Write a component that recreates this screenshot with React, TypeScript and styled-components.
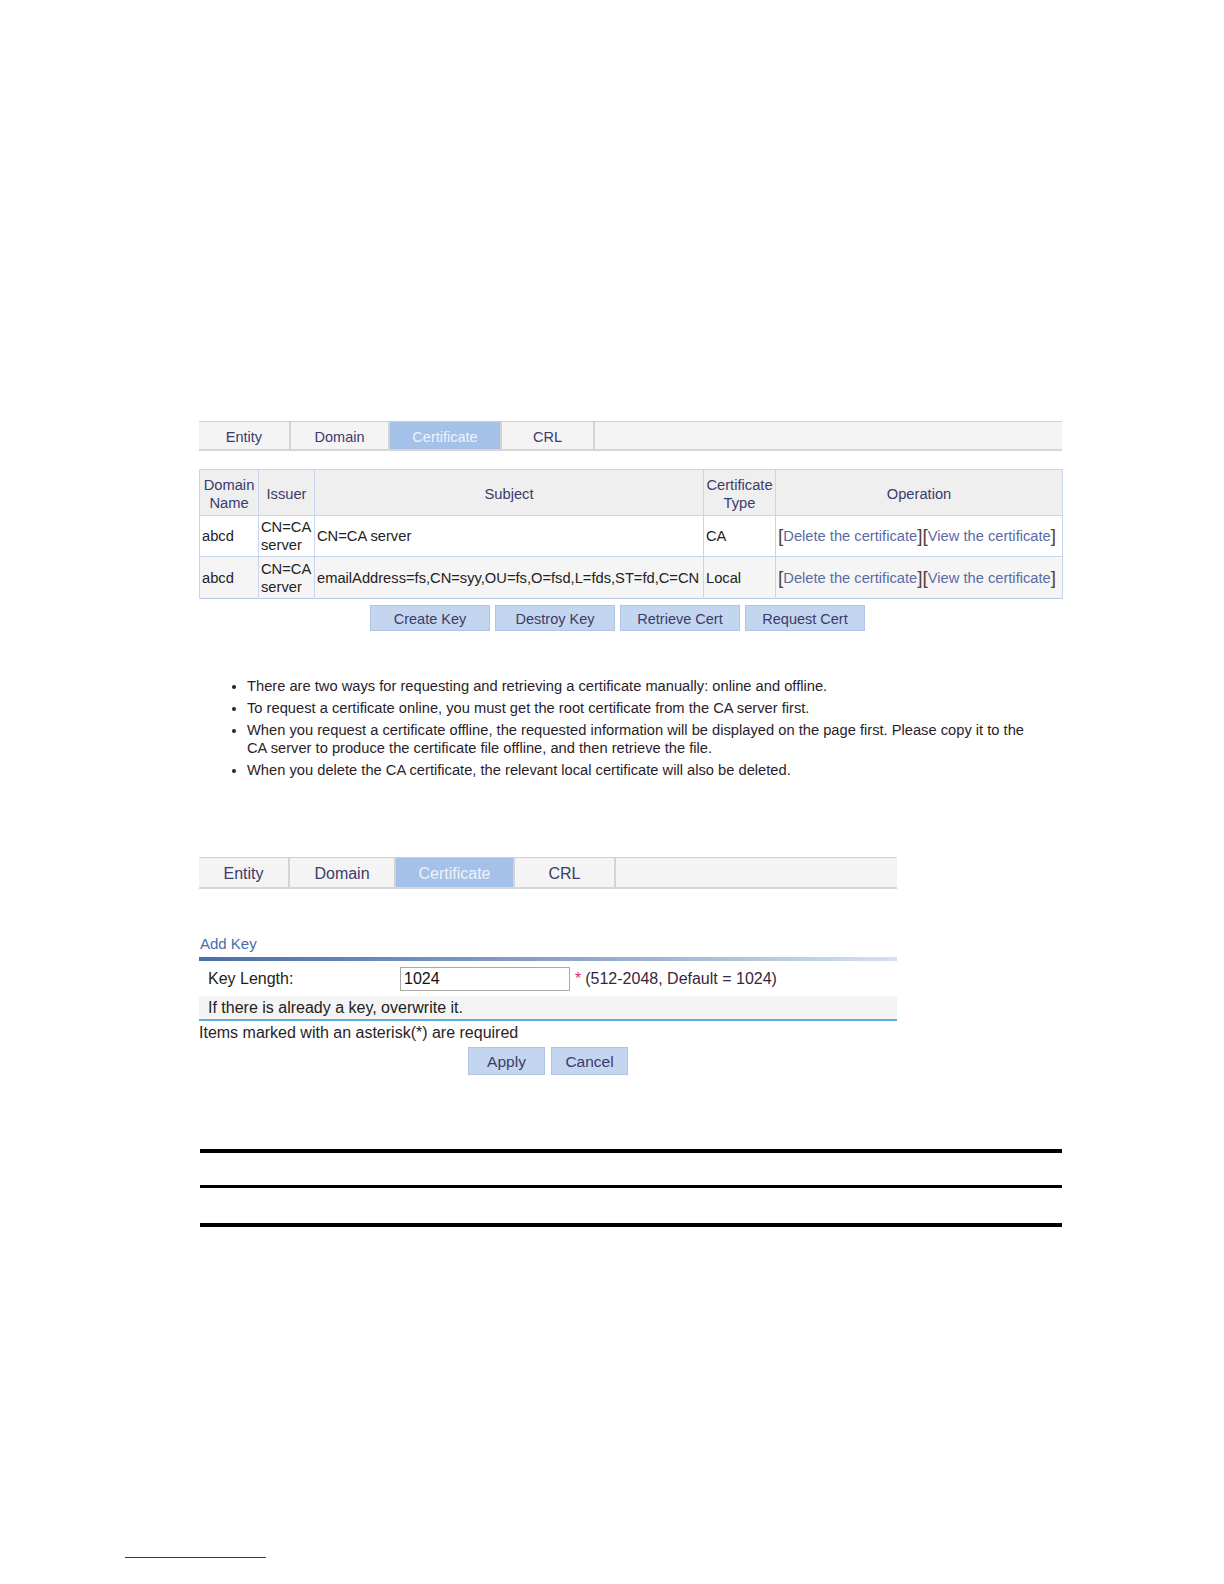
import React from "react"
import styled, { createGlobalStyle } from "styled-components"

const GlobalStyle = createGlobalStyle`
    html, body {
        margin: 0;
        padding: 0;
        background: #ffffff;
    }
    body {
        font-family: "Liberation Sans", Arial, sans-serif;
        color: #222222;
    }
`

const Page = styled.div`
    width: 1224px;
    height: 1584px;
    position: relative;
    padding: 421px 0 0 199px;
    box-sizing: border-box;
`

const Column = styled.div<{ $width: number; $top?: number }>`
    width: ${({ $width }) => $width}px;
    margin-top: ${({ $top }) => $top || 0}px;
`

const TabBar = styled.div<{ $height: number }>`
    display: flex;
    height: ${({ $height }) => $height}px;
    background: #f4f4f4;
    border-top: 1px solid #cfcfcf;
    border-bottom: 2px solid #d6d6d6;
    box-sizing: border-box;
`

const Tab = styled.div<{ $width: number; $active?: boolean; $size: number }>`
    width: ${({ $width }) => $width}px;
    display: flex;
    align-items: center;
    justify-content: center;
    font-size: ${({ $size }) => $size}px;
    color: ${({ $active }) => ($active ? "#eef3fb" : "#3b3b6b")};
    background: ${({ $active }) => ($active ? "#a6c1e9" : "transparent")};
    border-right: 2px solid #d3d3d3;
    box-sizing: border-box;
    padding-top: 3px;
`

const CertTable = styled.table`
    margin-top: 18px;
    width: 863px;
    border-collapse: collapse;
    table-layout: fixed;
    border: 1px solid #b6c9e7;
    font-size: 14.7px;
`

const HeadCell = styled.th`
    background: #efefef;
    color: #3b3b6b;
    font-weight: normal;
    border: 1px solid #c7d6ee;
    line-height: 18px;
    padding: 4px 1px 2px;
    height: 46px;
    box-sizing: border-box;
    text-align: center;
`

const Row = styled.tr<{ $alt?: boolean }>`
    background: ${({ $alt }) => ($alt ? "#f5f5f5" : "#ffffff")};
`

const Cell = styled.td<{ $height: number }>`
    border-left: 1px solid #c7d6ee;
    border-right: 1px solid #c7d6ee;
    border-top: 1px solid #c7d6ee;
    line-height: 18px;
    padding: 0 2px;
    height: ${({ $height }) => $height}px;
    box-sizing: border-box;
    color: #222222;
    vertical-align: middle;
    white-space: nowrap;
    overflow: hidden;
`

const WrapCell = styled(Cell)`
    white-space: normal;
    padding: 0 2px;
`

const Bracket = styled.span`
    font-size: 19px;
    color: #5a4236;
    vertical-align: -1px;
`

const OpLink = styled.span`
    color: #5b6aa6;
`

const ButtonRow = styled.div<{ $gap: number; $left: number; $top: number }>`
    display: flex;
    gap: ${({ $gap }) => $gap}px;
    margin-top: ${({ $top }) => $top}px;
    padding-left: ${({ $left }) => $left}px;
`

const Button = styled.div<{ $width: number; $height: number; $size: number }>`
    width: ${({ $width }) => $width}px;
    height: ${({ $height }) => $height}px;
    display: flex;
    align-items: center;
    justify-content: center;
    background: #c4d5ef;
    border: 1px solid #b0c4e6;
    box-sizing: border-box;
    color: #3b3b6b;
    font-size: ${({ $size }) => $size}px;
    padding-top: 2px;
`

const Notes = styled.ul`
    margin: 46px 0 0 0;
    padding: 0 0 0 48px;
    list-style: disc;
    font-size: 14.7px;
    line-height: 18px;
    color: #2a1d2a;
    width: 792px;
    li {
        margin-bottom: 4px;
    }
`

const SectionTitle = styled.div`
    margin-top: 46px;
    color: #4a6cae;
    font-size: 15px;
    line-height: 18px;
    padding-left: 1px;
`

const TitleRule = styled.div`
    height: 4px;
    margin-top: 4px;
    background: linear-gradient(to right, #4b6ea9, #8ea8cd 55%, #d6e0ee);
`

const FormRow = styled.div<{ $height: number; $alt?: boolean }>`
    display: flex;
    align-items: center;
    height: ${({ $height }) => $height}px;
    background: ${({ $alt }) => ($alt ? "#f4f4f4" : "#ffffff")};
    padding-left: 9px;
    font-size: 16px;
    color: #222222;
`

const Label = styled.div`
    width: 192px;
`

const Input = styled.div`
    width: 170px;
    height: 24px;
    border: 1px solid #a9a9a9;
    box-sizing: border-box;
    display: flex;
    align-items: center;
    padding-left: 3px;
    font-size: 16px;
    color: #111;
`

const Star = styled.span`
    color: #e0306a;
    margin-left: 5px;
    margin-right: 4px;
`

const Hint = styled.span`
    color: #3a2540;
`

const FormRule = styled.div`
    height: 2px;
    background: #5aaedf;
`

const Footnote = styled.div`
    font-size: 16px;
    line-height: 20px;
    color: #2a1d2a;
    margin-top: 2px;
`

const BlackRule = styled.div<{ $thick: number; $top: number }>`
    height: ${({ $thick }) => $thick}px;
    background: #000;
    margin-top: ${({ $top }) => $top}px;
    width: 862px;
    margin-left: 1px;
`

const FooterLine = styled.div`
    position: absolute;
    left: 125px;
    top: 1557px;
    width: 141px;
    height: 1px;
    background: #1f3a8a;
`

const tabs = ["Entity", "Domain", "Certificate", "CRL"]

const rows = [
    { subject: "CN=CA server", type: "CA" },
    {
        subject: "emailAddress=fs,CN=syy,OU=fs,O=fsd,L=fds,ST=fd,C=CN",
        type: "Local",
    },
]

const notes = [
    "There are two ways for requesting and retrieving a certificate manually: online and offline.",
    "To request a certificate online, you must get the root certificate from the CA server first.",
    "When you request a certificate offline, the requested information will be displayed on the page first. Please copy it to the CA server to produce the certificate file offline, and then retrieve the file.",
    "When you delete the CA certificate, the relevant local certificate will also be deleted.",
]

export default function App() {
    return (
        <>
            <GlobalStyle />
            <Page>
                <Column $width={863}>
                    <TabBar $height={30}>
                        {tabs.map((t, i) => (
                            <Tab
                                key={t}
                                $size={14.5}
                                $width={[92, 99, 112, 93][i]}
                                $active={t === "Certificate"}
                            >
                                {t}
                            </Tab>
                        ))}
                    </TabBar>

                    <CertTable>
                        <colgroup>
                            <col style={{ width: 59 }} />
                            <col style={{ width: 56 }} />
                            <col style={{ width: 389 }} />
                            <col style={{ width: 72 }} />
                            <col style={{ width: 287 }} />
                        </colgroup>
                        <thead>
                            <tr>
                                <HeadCell>Domain Name</HeadCell>
                                <HeadCell>Issuer</HeadCell>
                                <HeadCell>Subject</HeadCell>
                                <HeadCell>Certificate Type</HeadCell>
                                <HeadCell>Operation</HeadCell>
                            </tr>
                        </thead>
                        <tbody>
                            {rows.map((r, i) => (
                                <Row key={i} $alt={i === 1}>
                                    <Cell $height={i === 0 ? 41 : 42}>abcd</Cell>
                                    <WrapCell $height={i === 0 ? 41 : 42}>
                                        CN=CA server
                                    </WrapCell>
                                    <Cell $height={i === 0 ? 41 : 42}>{r.subject}</Cell>
                                    <Cell $height={i === 0 ? 41 : 42}>{r.type}</Cell>
                                    <Cell $height={i === 0 ? 41 : 42}>
                                        <Bracket>[</Bracket>
                                        <OpLink>Delete the certificate</OpLink>
                                        <Bracket>][</Bracket>
                                        <OpLink>View the certificate</OpLink>
                                        <Bracket>]</Bracket>
                                    </Cell>
                                </Row>
                            ))}
                        </tbody>
                    </CertTable>

                    <ButtonRow $gap={5} $left={171} $top={6}>
                        {["Create Key", "Destroy Key", "Retrieve Cert", "Request Cert"].map(
                            (b) => (
                                <Button key={b} $width={120} $height={26} $size={14.5}>
                                    {b}
                                </Button>
                            )
                        )}
                    </ButtonRow>
                </Column>

                <Notes>
                    {notes.map((n) => (
                        <li key={n}>{n}</li>
                    ))}
                </Notes>

                <Column $width={698} $top={78}>
                    <TabBar $height={32}>
                        {tabs.map((t, i) => (
                            <Tab
                                key={t}
                                $size={16}
                                $width={[91, 106, 119, 101][i]}
                                $active={t === "Certificate"}
                            >
                                {t}
                            </Tab>
                        ))}
                    </TabBar>

                    <SectionTitle>Add Key</SectionTitle>
                    <TitleRule />
                    <FormRow $height={35}>
                        <Label>Key Length:</Label>
                        <Input>1024</Input>
                        <Star>*</Star>
                        <Hint>(512-2048, Default = 1024)</Hint>
                    </FormRow>
                    <FormRow $height={23} $alt>
                        If there is already a key, overwrite it.
                    </FormRow>
                    <FormRule />
                    <Footnote>Items marked with an asterisk(*) are required</Footnote>
                    <ButtonRow $gap={6} $left={269} $top={4}>
                        <Button $width={77} $height={28} $size={15.5}>
                            Apply
                        </Button>
                        <Button $width={77} $height={28} $size={15.5}>
                            Cancel
                        </Button>
                    </ButtonRow>
                </Column>

                <BlackRule $thick={4} $top={74} />
                <BlackRule $thick={3} $top={32} />
                <BlackRule $thick={4} $top={35} />

                <FooterLine />
            </Page>
        </>
    )
}
